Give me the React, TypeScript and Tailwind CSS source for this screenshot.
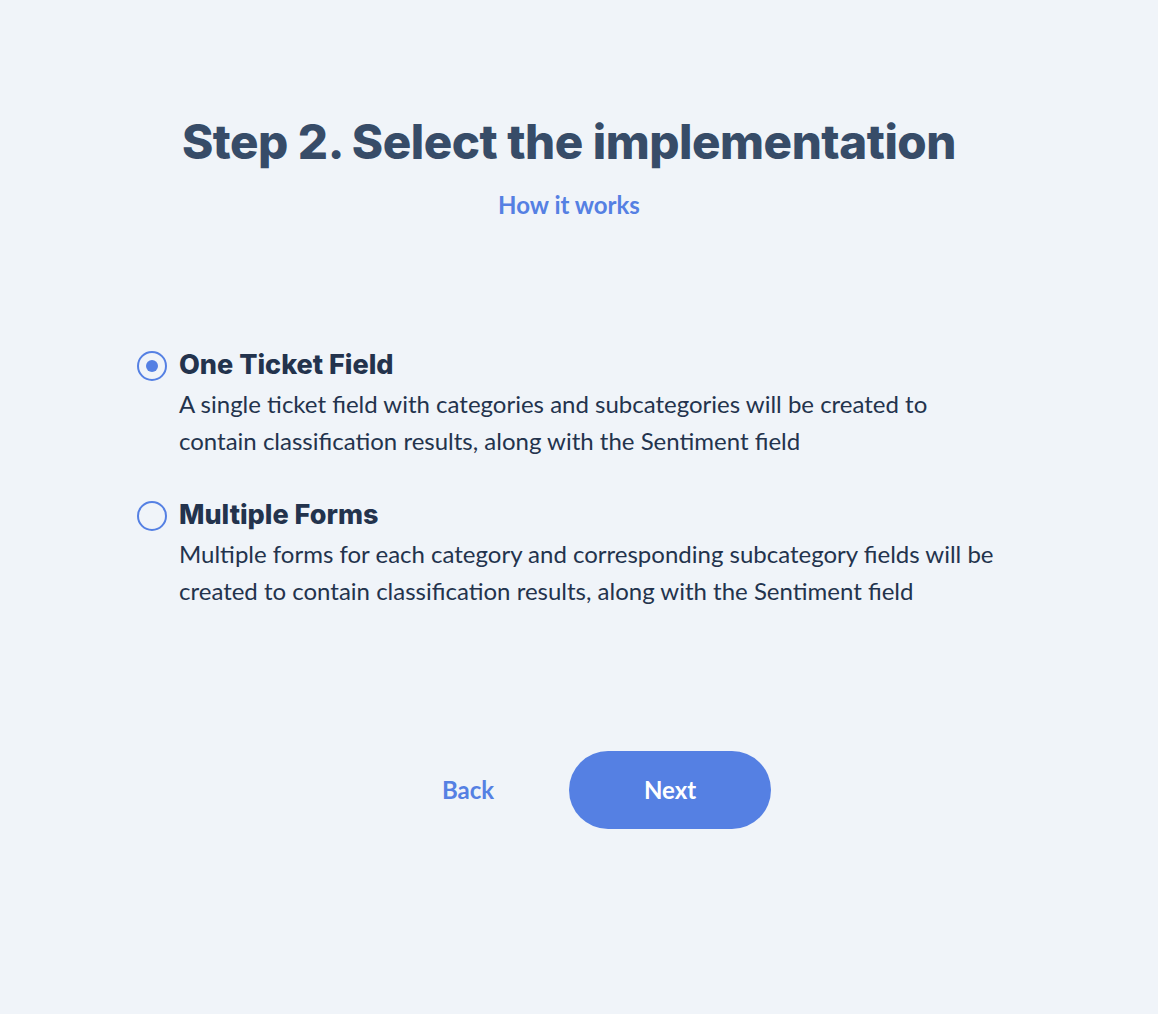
import React from "react";

export default function App() {
  return (
    <div className="min-h-[1014px] w-full bg-[#f0f4f9] flex flex-col items-center pr-[20px]" style={{ fontFamily: "Lato, sans-serif" }}>
      <h1
        className="mt-[110px] text-[47.5px] leading-[64px] font-extrabold text-[#374c68] tracking-[-0.01em]"
        style={{ fontFamily: "Inter, sans-serif" }}
      >
        Step 2. Select the implementation
      </h1>
      <a className="mt-[15px] text-[24px] leading-[32px] font-bold text-[#5580e3]">How it works</a>

      <div className="mt-[124px] w-[864px] flex flex-col gap-[36px]">
        <Option
          selected
          title="One Ticket Field"
          text="A single ticket field with categories and subcategories will be created to contain classification results, along with the Sentiment field"
        />
        <Option
          title="Multiple Forms"
          text="Multiple forms for each category and corresponding subcategory fields will be created to contain classification results, along with the Sentiment field"
        />
      </div>

      <div className="mt-[142px] flex">
        <button className="w-[202px] h-[78px] text-[24px] font-bold text-[#5580e3]">Back</button>
        <button className="w-[202px] h-[78px] rounded-full bg-[#5580e3] text-[24px] font-bold text-white">Next</button>
      </div>
    </div>
  );
}

function Option({ selected, title, text }: { selected?: boolean; title: string; text: string }) {
  return (
    <div className="flex gap-[12px]">
      <div className="pt-[6px]">
        <div className="w-[30px] h-[30px] rounded-full border-2 border-[#5580e3] flex items-center justify-center">
          {selected && <div className="w-[12px] h-[12px] rounded-full bg-[#5580e3]" />}
        </div>
      </div>
      <div className="flex flex-col">
        <div className="text-[27px] leading-[40px] font-extrabold text-[#23334d]" style={{ fontFamily: "Inter, sans-serif" }}>
          {title}
        </div>
        <div className="text-[24px] leading-[37px] text-[#23334d]">{text}</div>
      </div>
    </div>
  );
}
